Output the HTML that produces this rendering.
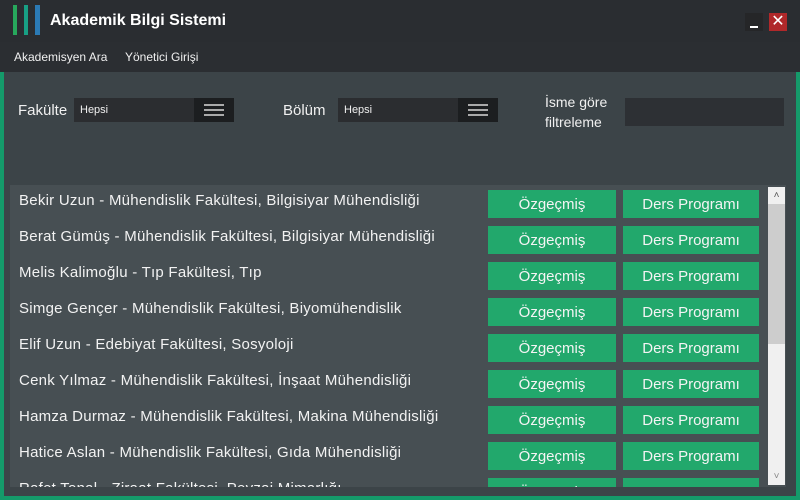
<!DOCTYPE html>
<html><head><meta charset="utf-8"><style>
*{margin:0;padding:0;box-sizing:border-box}
body{width:800px;height:500px;overflow:hidden;background:#159a6a;font-family:"Liberation Sans","DejaVu Sans",sans-serif;color:#f0f0f0;position:relative}
.abs{position:absolute}
.title{left:0;top:0;width:800px;height:42px;background:#2a2d31}
.menu{left:0;top:42px;width:800px;height:30px;background:#2b2e32;font-size:12px}
.content{left:4px;top:72px;width:792px;height:424px;background:#3c4448}
.sel{height:24px;background:#2b2d30;font-size:11px;line-height:24px;padding-left:6px}
.hb{top:0;width:40px;height:24px;background:#1c1e20}
.hb i{position:absolute;left:10px;width:20px;height:2px;background:#aaa}
.list{left:10px;top:185px;width:776px;height:302px;background:#474f53;overflow:hidden}
.row{position:absolute;left:0;width:757px;height:36px}
.row span{position:absolute;left:9px;top:7px;font-size:15px;letter-spacing:0.25px;color:#f2f2f2}
.b{position:absolute;top:5px;height:28px;background:#22a86c;color:#f4f4f4;font-size:15px;text-align:center;line-height:30px}
</style></head><body>
<div class="abs title">
<div class="abs" style="left:13px;top:5px;width:4px;height:30px;background:#27a85c"></div>
<div class="abs" style="left:24px;top:5px;width:4px;height:30px;background:#18a085"></div>
<div class="abs" style="left:35px;top:5px;width:5px;height:30px;background:#2b7ab5"></div>
<div class="abs" style="left:50px;top:12px;font-size:16px;font-weight:bold;color:#fff">Akademik Bilgi Sistemi</div>
<div class="abs" style="left:745px;top:13px;width:18px;height:18px;background:#252628"><div class="abs" style="left:5px;top:13px;width:8px;height:2px;background:#fff"></div></div>
<div class="abs" style="left:769px;top:13px;width:18px;height:18px;background:#b0282a;color:#fff;font-size:16px;font-weight:bold;text-align:center;line-height:18px">✕</div>
</div>
<div class="abs menu"><span class="abs" style="left:14px;top:8px">Akademisyen Ara</span><span class="abs" style="left:125px;top:8px">Yönetici Girişi</span></div>
<div class="abs content"></div>
<div class="abs" style="left:18px;top:102px;font-size:15px">Fakülte</div>
<div class="abs sel" style="left:74px;top:98px;width:160px">Hepsi<div class="abs hb" style="left:120px"><i style="top:6px"></i><i style="top:11px"></i><i style="top:16px"></i></div></div>
<div class="abs" style="left:283px;top:102px;font-size:15px">Bölüm</div>
<div class="abs sel" style="left:338px;top:98px;width:160px">Hepsi<div class="abs hb" style="left:120px"><i style="top:6px"></i><i style="top:11px"></i><i style="top:16px"></i></div></div>
<div class="abs" style="left:545px;top:92px;font-size:14px;line-height:20px">İsme göre<br>filtreleme</div>
<div class="abs" style="left:625px;top:98px;width:159px;height:28px;background:#2d3034"></div>
<div class="abs list">
<div class="row" style="top:0"><span>Bekir Uzun - Mühendislik Fakültesi, Bilgisiyar Mühendisliği</span><div class="b" style="left:478px;width:128px">Özgeçmiş</div><div class="b" style="left:613px;width:136px">Ders Programı</div></div>
<div class="row" style="top:36px"><span>Berat Gümüş - Mühendislik Fakültesi, Bilgisiyar Mühendisliği</span><div class="b" style="left:478px;width:128px">Özgeçmiş</div><div class="b" style="left:613px;width:136px">Ders Programı</div></div>
<div class="row" style="top:72px"><span>Melis Kalimoğlu - Tıp Fakültesi, Tıp</span><div class="b" style="left:478px;width:128px">Özgeçmiş</div><div class="b" style="left:613px;width:136px">Ders Programı</div></div>
<div class="row" style="top:108px"><span>Simge Gençer - Mühendislik Fakültesi, Biyomühendislik</span><div class="b" style="left:478px;width:128px">Özgeçmiş</div><div class="b" style="left:613px;width:136px">Ders Programı</div></div>
<div class="row" style="top:144px"><span>Elif Uzun - Edebiyat Fakültesi, Sosyoloji</span><div class="b" style="left:478px;width:128px">Özgeçmiş</div><div class="b" style="left:613px;width:136px">Ders Programı</div></div>
<div class="row" style="top:180px"><span>Cenk Yılmaz - Mühendislik Fakültesi, İnşaat Mühendisliği</span><div class="b" style="left:478px;width:128px">Özgeçmiş</div><div class="b" style="left:613px;width:136px">Ders Programı</div></div>
<div class="row" style="top:216px"><span>Hamza Durmaz - Mühendislik Fakültesi, Makina Mühendisliği</span><div class="b" style="left:478px;width:128px">Özgeçmiş</div><div class="b" style="left:613px;width:136px">Ders Programı</div></div>
<div class="row" style="top:252px"><span>Hatice Aslan - Mühendislik Fakültesi, Gıda Mühendisliği</span><div class="b" style="left:478px;width:128px">Özgeçmiş</div><div class="b" style="left:613px;width:136px">Ders Programı</div></div>
<div class="row" style="top:288px"><span>Rafet Tonal - Ziraat Fakültesi, Peyzaj Mimarlığı</span><div class="b" style="left:478px;width:128px">Özgeçmiş</div><div class="b" style="left:613px;width:136px">Ders Programı</div></div>
<div class="abs" style="left:758px;top:2px;width:17px;height:298px;background:#f0f0f0">
<div class="abs" style="left:0;top:0;width:17px;height:17px;color:#555;font-size:10px;text-align:center;line-height:17px">˄</div>
<div class="abs" style="left:0;top:17px;width:17px;height:140px;background:#cdcdcd"></div>
<div class="abs" style="left:0;top:281px;width:17px;height:17px;color:#888;font-size:10px;text-align:center;line-height:17px">˅</div>
</div>
</div>
</body></html>
